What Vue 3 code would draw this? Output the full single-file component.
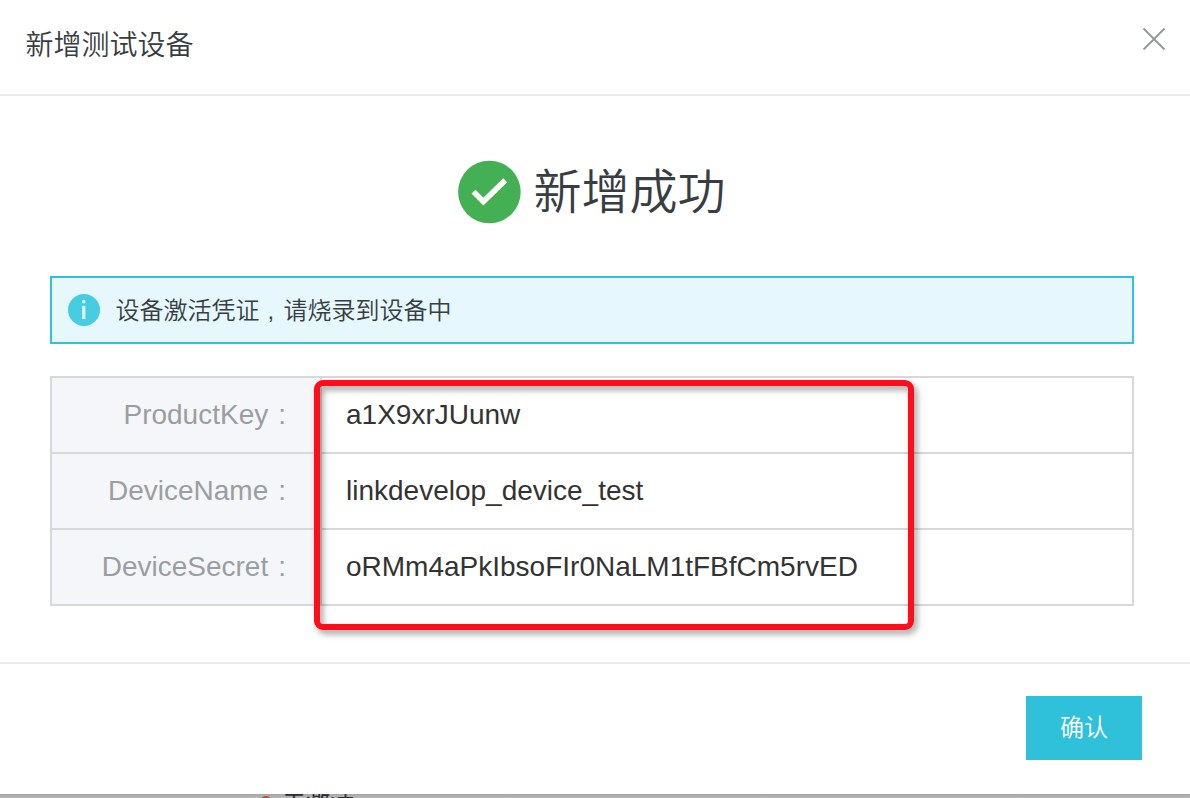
<script setup>
const credentials = [
  { label: 'ProductKey', value: 'a1X9xrJUunw' },
  { label: 'DeviceName', value: 'linkdevelop_device_test' },
  { label: 'DeviceSecret', value: 'oRMm4aPkIbsoFIr0NaLM1tFBfCm5rvED' },
]
</script>

<template>
  <div class="page">
    <section class="dialog">
      <header class="head">
        <h1 class="title">新增测试设备</h1>
        <button class="close" aria-label="关闭">
          <svg width="24" height="24" viewBox="0 0 24 24"><path d="M1.5 1.5 22.5 22.5M22.5 1.5 1.5 22.5" fill="none" stroke="#93979b" stroke-width="1.8" /></svg>
        </button>
      </header>
      <main class="body">
        <div class="result">
          <svg width="64" height="64" viewBox="0 0 64 64">
            <circle cx="32.4" cy="32" r="31.3" fill="#43b153" />
            <path d="M16.5 31.6 26.4 41.6 48.2 20.2" fill="none" stroke="#fff" stroke-width="5.6" />
          </svg>
          <span class="result-text">新增成功</span>
        </div>
        <div class="notice">
          <svg width="32" height="32" viewBox="0 0 32 32">
            <circle cx="16" cy="16" r="16" fill="#46cde2" />
            <circle cx="15.8" cy="7.8" r="1.8" fill="#e6f8fd" />
            <path d="M14.2 11.8h3.2v13.2h-3.2z" fill="#e6f8fd" />
          </svg>
          <span class="notice-text">设备激活凭证<span class="comma">,</span>请烧录到设备中</span>
        </div>
        <div class="table">
          <div v-for="row in credentials" :key="row.label" class="row">
            <div class="label"><span>{{ row.label }}</span><span class="colon">:</span></div>
            <div class="value">{{ row.value }}</div>
          </div>
          <div class="highlight"></div>
        </div>
      </main>
      <footer class="foot">
        <button class="confirm">确认</button>
      </footer>
    </section>
    <div class="behind"><i class="dot"></i><span class="state">未激活</span></div>
  </div>
</template>

<style>
body { margin: 0; overflow: hidden; }
</style>

<style scoped>
.page {
  width: 1190px;
  height: 798px;
  overflow: hidden;
  background: #fff;
  color: #373d41;
  font-family: "Liberation Sans", "Noto Sans CJK SC", sans-serif;
}
button { border: 0; padding: 0; font-family: inherit; }
.dialog { height: 794px; display: flex; flex-direction: column; }
.head {
  height: 96px;
  box-sizing: border-box;
  border-bottom: 2px solid #ebebeb;
  padding: 24px 24px 0 25.5px;
  display: flex;
  justify-content: space-between;
  align-items: flex-start;
}
.title { margin: 2px 0 0; font-size: 28px; line-height: 40px; font-weight: 350; }
.close { width: 24px; height: 24px; background: none; margin-top: 3px; }
.close svg { display: block; }
.body { height: 566px; box-sizing: border-box; padding: 64px 56px 0 50px; }
.result { height: 64px; display: flex; align-items: center; padding-left: 407px; }
.result-text { margin: 2px 0 0 12.5px; font-size: 48px; line-height: 64px; font-weight: 350; white-space: nowrap; }
.notice {
  margin-top: 52px;
  height: 68px;
  box-sizing: border-box;
  border: 2px solid #2fc2d9;
  background: #e6f8fd;
  display: flex;
  align-items: center;
  padding-left: 16px;
}
.notice-text { margin: 2px 0 0 15.5px; font-size: 24px; line-height: 36px; font-weight: 350; }
.comma { display: inline-block; width: 24px; box-sizing: border-box; padding-left: 8px; }
.table { position: relative; margin-top: 32px; border: 2px solid #d7d8d9; }
.row { height: 74px; display: flex; font-size: 28px; line-height: 74px; }
.row + .row { border-top: 2px solid #d7d8d9; }
.label {
  width: 270px;
  box-sizing: border-box;
  border-right: 2px solid #d7d8d9;
  background: #f4f6fa;
  color: #9b9ea0;
  display: flex;
  justify-content: flex-end;
  padding-right: 34px;
}
.colon { margin-left: 10px; }
.value { padding-left: 24px; color: #333; }
.highlight {
  position: absolute;
  left: 262px;
  top: 1.5px;
  width: 588px;
  height: 238px;
  border: 6px solid #ff0d1b;
  border-radius: 9px;
  filter: drop-shadow(3px 4px 3px rgba(0, 0, 0, .38));
}
.foot {
  flex: 1;
  border-top: 2px solid #ebebeb;
  display: flex;
  justify-content: flex-end;
  padding: 32px 48px 0 0;
}
.confirm {
  width: 116px;
  height: 64px;
  background: #2fc1da;
  color: #fff;
  font-size: 24px;
  line-height: 64px;
  font-weight: 350;
}
.behind {
  height: 4px;
  overflow: hidden;
  background: linear-gradient(#a6a6a6, #b9b9b9);
  display: flex;
  align-items: flex-start;
  padding-left: 260px;
}
.dot { width: 12px; height: 12px; flex: none; margin-top: 1.5px; border-radius: 50%; background: #bb4a3c; }
.state { margin: -8px 0 0 10px; font-size: 24px; line-height: 32px; color: #292e31; }
</style>
